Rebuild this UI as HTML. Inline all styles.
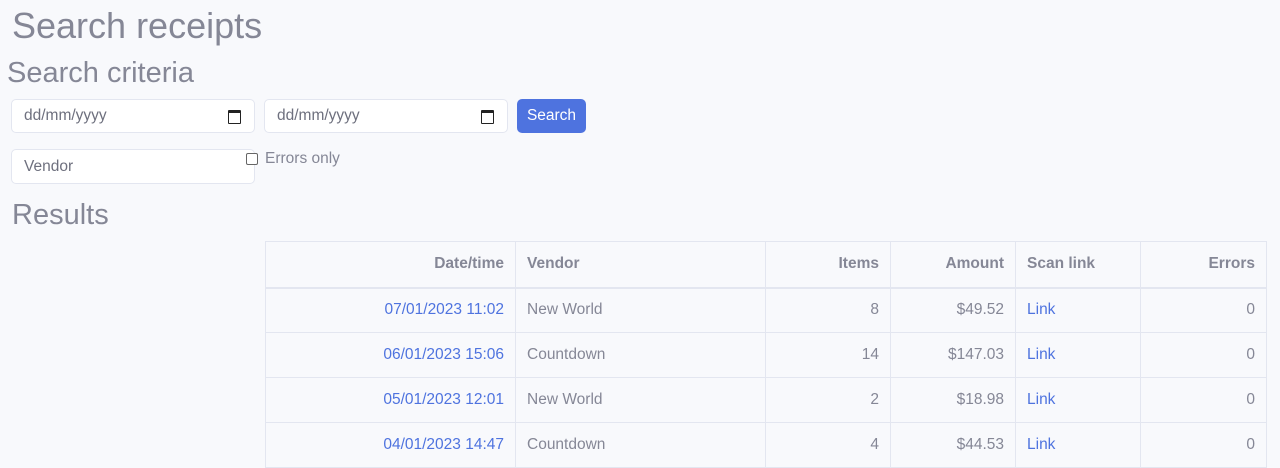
<!DOCTYPE html>
<html><head><style>
body{margin:0;background:#f8f9fc;font-family:"Liberation Sans",sans-serif;color:#858796;width:1280px;height:439px;overflow:hidden;position:relative}
.a{position:absolute}
h1{position:absolute;left:12px;top:5px;margin:0;font-weight:400;font-size:36px;color:#858796}
h2{position:absolute;margin:0;font-weight:400;font-size:29px;color:#858796}
.inp{position:absolute;background:#fff;border:1px solid #e3e6f0;border-radius:5px;height:34px;box-sizing:border-box;font-size:15.5px;line-height:32px;padding-left:12px;color:#6e707e}
.cal{position:absolute;right:13px;top:10px;width:11px;height:10px;border:1.5px solid #222;border-top-width:3px;border-radius:1px}
.btn{position:absolute;left:517px;top:99px;width:69px;height:34px;background:#4e73df;border-radius:5px;color:#fff;font-size:15.5px;text-align:center;line-height:34px}
table{position:absolute;left:265px;top:241px;border-collapse:collapse;font-size:15.5px}
td,th{border:1px solid #e3e6f0;height:45px;padding:0 11px;box-sizing:border-box}
th{font-weight:700;border-bottom:2px solid #e3e6f0}
.r{text-align:right}.l{text-align:left}
a{color:#4e73df;text-decoration:none}
</style></head><body>
<h1>Search receipts</h1>
<h2 style="left:7px;top:57px">Search criteria</h2>
<div class="inp" style="left:11px;top:99px;width:244px">dd/mm/yyyy<span class="cal"></span></div>
<div class="inp" style="left:264px;top:99px;width:244px">dd/mm/yyyy<span class="cal"></span></div>
<div class="btn">Search</div>
<div class="inp" style="left:11px;top:149px;width:244px;height:35px;line-height:33px">Vendor</div>
<div class="a" style="left:246px;top:153px;width:10px;height:10px;border:1px solid #666;border-radius:2px;background:#fff"></div>
<div class="a" style="left:265px;top:150px;font-size:15.5px">Errors only</div>
<h2 style="left:12px;top:199px">Results</h2>
<table>
<tr style="height:46px"><th class="r" style="width:250px">Date/time</th><th class="l" style="width:250px">Vendor</th><th class="r" style="width:125px">Items</th><th class="r" style="width:125px">Amount</th><th class="l" style="width:125px">Scan link</th><th class="r" style="width:126px">Errors</th></tr>
<tr><td class="r"><a>07/01/2023 11:02</a></td><td>New World</td><td class="r">8</td><td class="r">$49.52</td><td><a>Link</a></td><td class="r">0</td></tr>
<tr><td class="r"><a>06/01/2023 15:06</a></td><td>Countdown</td><td class="r">14</td><td class="r">$147.03</td><td><a>Link</a></td><td class="r">0</td></tr>
<tr><td class="r"><a>05/01/2023 12:01</a></td><td>New World</td><td class="r">2</td><td class="r">$18.98</td><td><a>Link</a></td><td class="r">0</td></tr>
<tr><td class="r"><a>04/01/2023 14:47</a></td><td>Countdown</td><td class="r">4</td><td class="r">$44.53</td><td><a>Link</a></td><td class="r">0</td></tr>
</table>
</body></html>
